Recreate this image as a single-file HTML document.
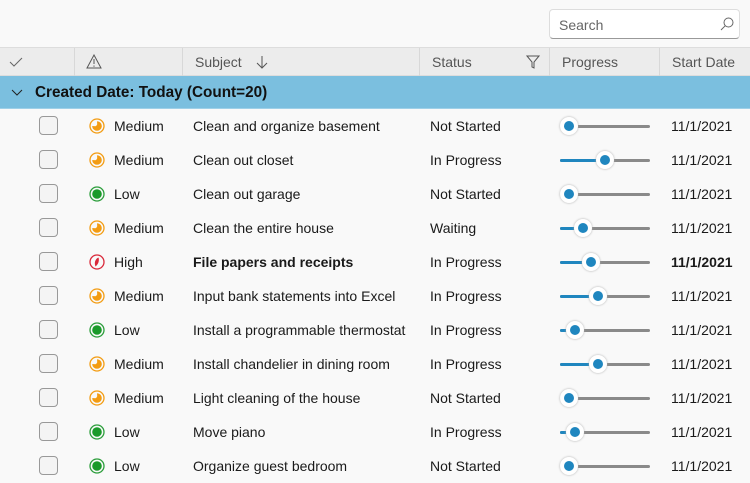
<!DOCTYPE html>
<html><head><style>
body{margin:0;width:750px;height:478px;overflow:hidden;background:#f9f9f9;font-family:"Liberation Sans",sans-serif;font-size:14px;color:#1a1a1a;position:relative}
.a{position:absolute}
.search{left:549px;top:9px;width:191px;height:30px;background:#fff;border:1px solid #ddd;border-bottom:1px solid #999;border-radius:4px;box-sizing:border-box}
.hdr{left:0;top:47px;width:750px;height:29px;background:#ececec;border-top:1px solid #ddd;border-bottom:1px solid #ddd;box-sizing:border-box;color:#555}
.sep{top:0;width:1px;height:28px;background:#d8d8d8}
.grp{left:0;top:76px;width:750px;height:32px;background:#7bbfdf;border-bottom:1px solid #9fd0e8}
.row{left:0;width:750px;height:34px}
.cb{left:39px;top:7px;width:19px;height:19px;border:1px solid #999;border-radius:4px;background:#f4f4f4;box-sizing:border-box}
.t{top:9px;line-height:16px}
.trk{left:560px;top:16px;width:90px;height:3px;background:#8a8a8a;border-radius:2px}
.fill{left:560px;top:16px;height:3px;background:#1f86bf;border-radius:2px}
.th{top:8px;width:18px;height:18px;border-radius:50%;background:#fff;box-shadow:0 0 2px #aaa}
.th::after{content:"";position:absolute;left:4px;top:4px;width:10px;height:10px;border-radius:50%;background:#1f86bf}
</style></head><body>
<div class="a search"><span class="a" style="left:9px;top:7px;color:#666">Search</span>
<svg class="a" style="left:170px;top:7px" width="14" height="14"><circle cx="8.5" cy="5.5" r="4.5" fill="none" stroke="#666"/><path d="M5.3 8.7L1 13" stroke="#666"/></svg></div>
<div class="a hdr">
<svg class="a" style="left:9px;top:8px" width="14" height="12"><path d="M1 6l4 4 8-8" fill="none" stroke="#666"/></svg>
<div class="a sep" style="left:74px"></div>
<svg class="a" style="left:86px;top:6px" width="16" height="15"><path d="M8 1L15 14H1Z" fill="none" stroke="#555"/><path d="M8 5v5M8 11.5v1.3" stroke="#555"/></svg>
<div class="a sep" style="left:182px"></div>
<span class="a" style="left:195px;top:6px">Subject</span>
<svg class="a" style="left:256px;top:7px" width="12" height="14"><path d="M6 1v12M1 8l5 5 5-5" fill="none" stroke="#555"/></svg>
<div class="a sep" style="left:419px"></div>
<span class="a" style="left:432px;top:6px">Status</span>
<svg class="a" style="left:526px;top:7px" width="14" height="14"><path d="M1 1h12L8 7v6L6 12V7Z" fill="none" stroke="#555"/></svg>
<div class="a sep" style="left:549px"></div>
<span class="a" style="left:562px;top:6px">Progress</span>
<div class="a sep" style="left:659px"></div>
<span class="a" style="left:672px;top:6px">Start Date</span>
</div>
<div class="a grp"><svg class="a" style="left:11px;top:13px" width="12" height="8"><path d="M1 1l5 5 5-5" fill="none" stroke="#222"/></svg>
<span class="a" style="left:35px;top:8px;font-size:15.3px;font-weight:bold;color:#111">Created Date: Today (Count=20)</span></div>
<div id="rows"></div>
<script>
var R=[["M","Medium","Clean and organize basement","Not Started",569],["M","Medium","Clean out closet","In Progress",605],["L","Low","Clean out garage","Not Started",569],["M","Medium","Clean the entire house","Waiting",583],["H","High","File papers and receipts","In Progress",591],["M","Medium","Input bank statements into Excel","In Progress",598],["L","Low","Install a programmable thermostat","In Progress",575],["M","Medium","Install chandelier in dining room","In Progress",598],["M","Medium","Light cleaning of the house","Not Started",569],["L","Low","Move piano","In Progress",575],["L","Low","Organize guest bedroom","Not Started",569]];
var h="";R.forEach(function(r,i){var y=109+i*34;var ic;
if(r[0]=="L")ic='<circle cx="8" cy="8" r="7" fill="none" stroke="#2a9d3a" stroke-width="1.3"/><circle cx="8" cy="8" r="4.8" fill="#1a9a2a"/>';
else if(r[0]=="M")ic='<circle cx="8" cy="8" r="7" fill="none" stroke="#f39c12" stroke-width="1.3"/><path d="M8 3.2A4.8 4.8 0 1 1 3.2 8 L6.5 8.2 A3 3 0 0 0 8.2 6.2Z" fill="#f39c12"/>';
else ic='<circle cx="8" cy="8" r="7" fill="none" stroke="#d9283a" stroke-width="1.3"/><path d="M9.5 3.5C6 5 5 9 6.5 12.5 9.5 10 10.5 6.5 9.5 3.5Z" fill="#d9283a"/>';
var b=r[0]=="H"?"font-weight:bold;":"";
h+='<div class="a row" style="top:'+y+'px"><div class="a cb"></div><svg class="a" style="left:89px;top:9px" width="16" height="16">'+ic+'</svg><span class="a t" style="left:114px">'+r[1]+'</span><span class="a t" style="left:193px;'+b+'">'+r[2]+'</span><span class="a t" style="left:430px">'+r[3]+'</span><div class="a trk"></div><div class="a fill" style="width:'+(r[4]-560)+'px"></div><div class="a th" style="left:'+(r[4]-9)+'px"></div><span class="a t" style="left:671px;'+b+'">11/1/2021</span></div>';});
document.getElementById("rows").innerHTML=h;
</script>
</body></html>
